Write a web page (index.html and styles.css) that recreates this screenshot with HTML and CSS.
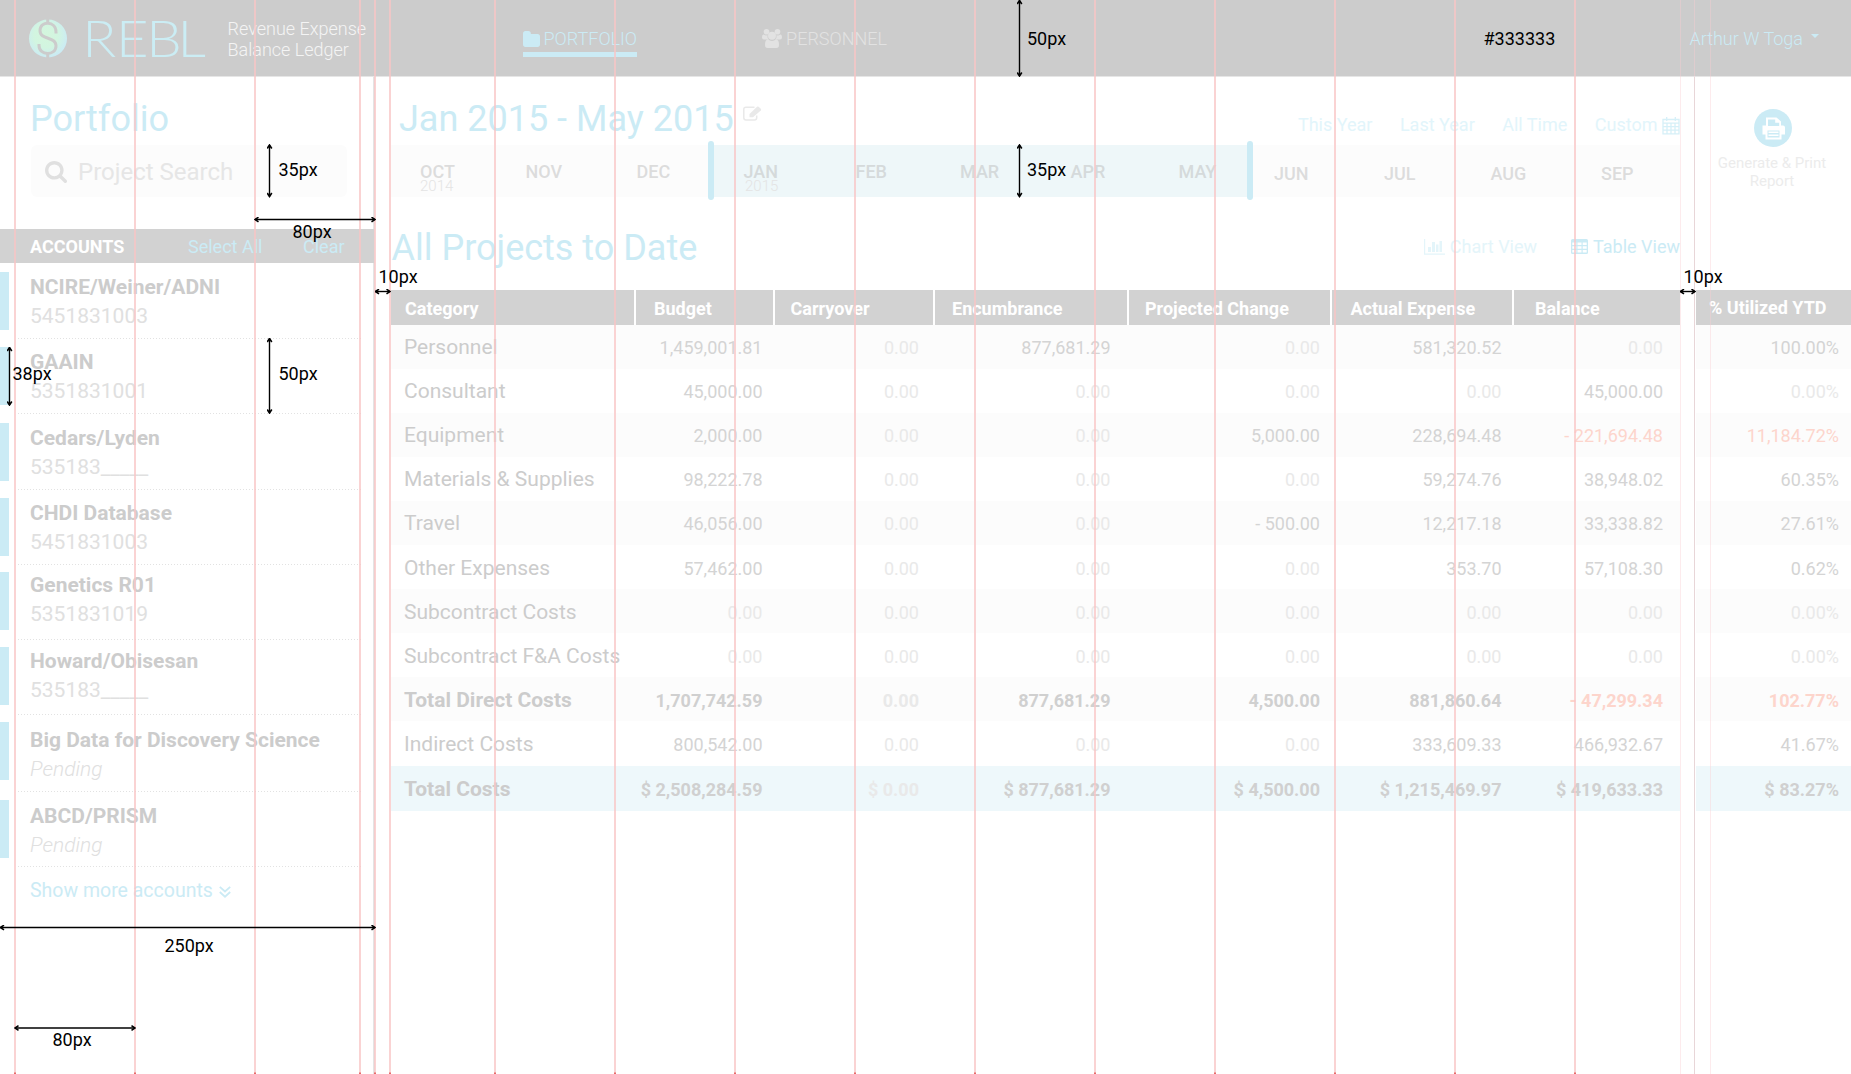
FILE: index.html
```html
<!DOCTYPE html>
<html lang="en">
<head>
<meta charset="utf-8">
<title>REBL - Portfolio</title>
<link rel="stylesheet" href="styles.css">
</head>
<body>
<header class="topbar">
  <svg class="logo" width="180" height="44" viewBox="0 0 180 44" role="img">
    <defs>
      <radialGradient id="coin" cx=".45" cy=".42" r=".58">
        <stop offset="0" stop-color="#d4f6dd"/><stop offset=".55" stop-color="#d2f5e0"/><stop offset="1" stop-color="#cbebf4"/>
      </radialGradient>
    </defs>
    <circle cx="19" cy="22.500" r="19" fill="url(#coin)"/>
    <path class="coin-mark" d="M27 17.500V16C27 4.500 11 4.500 11 14.500C11 24.500 27 20 27 30C27 40 10 40 10 29.500V28M18.700 3v5.500M18.700 37v5"/>
    <text class="wordmark" y="41" x="48.500 79 106.500 135" transform="scale(1.100 1)">REBL</text>
  </svg>
  <div class="tagline">Revenue Expense<br>Balance Ledger</div>
  <nav class="nav">
    <a class="nav-item active"><svg width="17" height="16" viewBox="0 128 1664 1408" preserveAspectRatio="none"><path d="M1664 608v704q0 92-66 158t-158 66H224q-92 0-158-66T0 1312V352q0-92 66-158t158-66h320q92 0 158 66t66 158v32h672q92 0 158 66t66 158z"/></svg>PORTFOLIO</a>
    <a class="nav-item"><svg class="people" width="20" height="19" viewBox="0 0 20 19"><circle cx="4.500" cy="2.800" r="2.800"/><circle cx="15.500" cy="2.800" r="2.800"/><path d="M0 8.500Q0 5.500 1.800 5.500Q4 7 5.500 6Q5 9 7 10.500H2Q0 10.500 0 8.500ZM20 8.500Q20 5.500 18.200 5.500Q16 7 14.500 6Q15 9 13 10.500H18Q20 10.500 20 8.500Z"/><circle cx="10" cy="6.800" r="4"/><path d="M3 16Q3 10.500 6 10.300Q10 13.500 14 10.300Q17 10.500 17 16Q17 19 14.500 19H5.500Q3 19 3 16Z"/></svg>PERSONNEL</a>
  </nav>
  <a class="user">Arthur W Toga<span class="caret"></span></a>
</header>

<div class="body">
  <aside class="sidebar">
    <h1 class="title">Portfolio</h1>
    <div class="search">
      <svg width="22" height="22" viewBox="64 128 1664 1664"><path d="M1216 832q0-185-131.500-316.500T768 384 451.500 515.500 320 832t131.500 316.500T768 1280t316.500-131.500T1216 832zm512 832q0 52-38 90t-90 38q-54 0-90-38l-343-342q-179 124-399 124-143 0-273.500-55.500t-225-150-150-225T64 832t55.500-273.500 150-225 225-150T768 128t273.500 55.500 225 150 150 225T1472 832q0 220-124 399l343 343q37 37 37 90z"/></svg>
      <span>Project Search</span>
    </div>
    <div class="accounts-head"><b>ACCOUNTS</b><a class="select-all">Select All</a><a>Clear</a></div>
    <ul class="accounts">
      <li class="a1"><i></i><div><b>NCIRE/Weiner/ADNI</b><span>5451831003</span></div></li>
      <li class="a2"><i></i><div><b>GAAIN</b><span>5351831001</span></div></li>
      <li class="a3"><i></i><div><b>Cedars/Lyden</b><span>535183_____</span></div></li>
      <li class="a4"><i></i><div><b>CHDI Database</b><span>5451831003</span></div></li>
      <li class="a5"><i></i><div><b>Genetics R01</b><span>5351831019</span></div></li>
      <li class="a6"><i></i><div><b>Howard/Obisesan</b><span>535183_____</span></div></li>
      <li class="a7"><i></i><div><b>Big Data for Discovery Science</b><span class="pending">Pending</span></div></li>
      <li class="a8"><i></i><div><b>ABCD/PRISM</b><span class="pending">Pending</span></div></li>
    </ul>
    <a class="more">Show more accounts<svg width="12" height="12" viewBox="0 0 12 12"><path d="M.8 .8L6 5.500L11.200 .8M.8 6L6 10.700L11.200 6"/></svg></a>
  </aside>

  <main class="main">
    <div class="range-head">
      <h2 class="title">Jan 2015 - May 2015</h2>
      <svg class="edit" width="19" height="15" viewBox="0 0 19 15"><path class="edit-box" d="M11.500 1.200H3Q.8 1.200 .8 3.200V11.800Q.8 13.900 3 13.900H11.500Q13.700 13.900 13.700 11.800V9.500"/><path d="M6.500 11.200V8L14 .8Q14.800 .1 15.600 .8L17.800 2.800Q18.500 3.600 17.800 4.400L10 11.200Z"/></svg>
      <div class="ranges"><a>This Year</a><a>Last Year</a><a>All Time</a><a>Custom</a>
        <svg width="18" height="19" viewBox="0 0 18 19"><path d="M1 3.500H17V17.800H1ZM1 7.200H17M1 10.700H17M1 14.200H17M5 7V18M9 7V18M13 7V18M4.700 1V5M13.300 1V5"/></svg>
      </div>
    </div>
    <div class="timeline">
      <div class="month">OCT<small>2014</small></div><div class="month">NOV</div><div class="month">DEC</div><div class="month on">JAN<small>2015</small></div><div class="month on">FEB</div><div class="month on">MAR</div><div class="month on">APR</div><div class="month on">MAY</div><div class="month low">JUN</div><div class="month low">JUL</div><div class="month low">AUG</div><div class="month low">SEP</div>
      <div class="selection"></div>
    </div>
    <div class="view-head">
      <h2 class="title">All Projects to Date</h2>
      <a class="view dim"><svg width="21" height="16" viewBox="0 0 21 16"><path d="M0 0H1.200V14.500H21V15.700H0ZM4 8H7V13H4ZM8 3H11V13H8ZM12 5.500H14.500V13H12ZM15.500 2H18V13H15.500Z"/></svg>Chart View</a>
      <a class="view"><svg width="17" height="15" viewBox="0 0 17 15"><path fill-rule="evenodd" d="M1.500 0H15.500Q17 0 17 1.500V13.500Q17 15 15.500 15H1.500Q0 15 0 13.500V1.500Q0 0 1.500 0ZM1.300 3.500V6H5.300V3.500ZM6.500 3.500V6H10.500V3.500ZM11.700 3.500V6H15.700V3.500ZM1.300 7.200V9.800H5.300V7.200ZM6.500 7.200V9.800H10.500V7.200ZM11.700 7.200V9.800H15.700V7.200ZM1.300 11V13.600H5.300V11ZM6.500 11V13.600H10.500V11ZM11.700 11V13.600H15.700V11Z"/></svg>Table View</a>
    </div>
    <table class="ledger">
      <colgroup><col class="c1"><col class="c2"><col class="c3"><col class="c4"><col class="c5"><col class="c6"><col class="c7"></colgroup>
      <thead><tr><th>Category</th><th>Budget</th><th>Carryover</th><th>Encumbrance</th><th>Projected Change</th><th>Actual Expense</th><th>Balance</th></tr></thead>
      <tbody>
        <tr><td>Personnel</td><td>1,459,001.81</td><td class="z">0.00</td><td>877,681.29</td><td class="z">0.00</td><td>581,320.52</td><td class="z">0.00</td></tr>
        <tr><td>Consultant</td><td>45,000.00</td><td class="z">0.00</td><td class="z">0.00</td><td class="z">0.00</td><td class="z">0.00</td><td>45,000.00</td></tr>
        <tr><td>Equipment</td><td>2,000.00</td><td class="z">0.00</td><td class="z">0.00</td><td>5,000.00</td><td>228,694.48</td><td class="neg">- 221,694.48</td></tr>
        <tr><td>Materials &amp; Supplies</td><td>98,222.78</td><td class="z">0.00</td><td class="z">0.00</td><td class="z">0.00</td><td>59,274.76</td><td>38,948.02</td></tr>
        <tr><td>Travel</td><td>46,056.00</td><td class="z">0.00</td><td class="z">0.00</td><td>- 500.00</td><td>12,217.18</td><td>33,338.82</td></tr>
        <tr><td>Other Expenses</td><td>57,462.00</td><td class="z">0.00</td><td class="z">0.00</td><td class="z">0.00</td><td>353.70</td><td>57,108.30</td></tr>
        <tr><td>Subcontract Costs</td><td class="z">0.00</td><td class="z">0.00</td><td class="z">0.00</td><td class="z">0.00</td><td class="z">0.00</td><td class="z">0.00</td></tr>
        <tr><td>Subcontract F&amp;A Costs</td><td class="z">0.00</td><td class="z">0.00</td><td class="z">0.00</td><td class="z">0.00</td><td class="z">0.00</td><td class="z">0.00</td></tr>
        <tr class="sum"><td>Total Direct Costs</td><td>1,707,742.59</td><td class="z">0.00</td><td>877,681.29</td><td>4,500.00</td><td>881,860.64</td><td class="neg">- 47,299.34</td></tr>
        <tr><td>Indirect Costs</td><td>800,542.00</td><td class="z">0.00</td><td class="z">0.00</td><td class="z">0.00</td><td>333,609.33</td><td>466,932.67</td></tr>
        <tr class="sum total"><td>Total Costs</td><td>$ 2,508,284.59</td><td class="z">$ 0.00</td><td>$ 877,681.29</td><td>$ 4,500.00</td><td>$ 1,215,469.97</td><td>$ 419,633.33</td></tr>
      </tbody>
    </table>
  </main>

  <aside class="rail">
    <a class="print">
      <svg width="38" height="38" viewBox="0 0 38 38"><circle cx="19" cy="19" r="19"/><path class="paper" fill-rule="evenodd" d="M12 8.500H22.500L27 12.500V16.500H29Q31 16.500 31 18.500V25.500H27.500V30.500H11.500V25.500H8.500V16.500H12ZM14 10.500V17H25.200V13.800H21.200V10.500ZM13.500 21.500V28.500H25.500V21.500ZM14.500 22.500H24.500V24H14.500ZM14.500 25.500H24.500V27H14.500Z"/></svg>
      <span>Generate &amp; Print<br>Report</span>
    </a>
    <table class="ledger util">
      <thead><tr><th>% Utilized YTD</th></tr></thead>
      <tbody>
        <tr><td>100.00%</td></tr>
        <tr><td class="z">0.00%</td></tr>
        <tr><td class="neg">11,184.72%</td></tr>
        <tr><td>60.35%</td></tr>
        <tr><td>27.61%</td></tr>
        <tr><td>0.62%</td></tr>
        <tr><td class="z">0.00%</td></tr>
        <tr><td class="z">0.00%</td></tr>
        <tr class="sum"><td class="neg">102.77%</td></tr>
        <tr><td>41.67%</td></tr>
        <tr class="sum total"><td>$ 83.27%</td></tr>
      </tbody>
    </table>
  </aside>
</div>

<!-- layout grid and dimension callouts laid over the page -->
<svg class="specs" width="1851" height="1074" viewBox="0 0 1851 1074">
  <defs>
    <marker id="tip" viewBox="0 0 6 6" refX="5" refY="3" markerWidth="6" markerHeight="6" markerUnits="userSpaceOnUse" orient="auto-start-reverse"><path d="M1.500 .7L5 3L1.500 5.300" fill="none" stroke="#000" stroke-width="1.600"/></marker>
  </defs>
  <path class="guide" d="M15 0V1074M135 0V1074M255 0V1074M360 0V1074M375 0V1074M390 0V1074M495 0V1074M615 0V1074M735 0V1074M855 0V1074M975 0V1074M1095 0V1074M1215 0V1074M1335 0V1074M1455 0V1074M1575 0V1074"/>
  <path class="guide-end" d="M15 1072.500v2M135 1072.500v2M255 1072.500v2M360 1072.500v2M375 1072.500v2M390 1072.500v2M495 1072.500v2M615 1072.500v2M735 1072.500v2M855 1072.500v2M975 1072.500v2M1095 1072.500v2M1215 1072.500v2M1335 1072.500v2M1455 1072.500v2M1575 1072.500v2"/>
  <path class="guide-thin" d="M1680.500 0V1074M1694.500 0V1074M1710.500 0V1074"/>
  <g class="dim-lines">
    <path d="M1019.500 0.500V76"/><path d="M1019.500 145V196.500"/><path d="M269.500 145V196.500"/><path d="M255 219.500H375"/>
    <path d="M375.500 291.500H390"/><path d="M1680.500 291.500H1695"/><path d="M269.500 338.500V413"/><path d="M9.500 347.500V405"/>
    <path d="M0.500 927.500H375"/><path d="M15 1028H135"/>
  </g>
  <g class="dim-text">
    <text x="1027" y="45">50px</text><text x="1027" y="176">35px</text><text x="278.500" y="176">35px</text><text x="292.500" y="238">80px</text>
    <text x="378.500" y="283">10px</text><text x="1683.500" y="283">10px</text><text x="278.500" y="380">50px</text><text x="12.500" y="380">38px</text>
    <text x="164.500" y="952">250px</text><text x="52.500" y="1046">80px</text><text x="1483.500" y="45">#333333</text>
  </g>
</svg>
</body>
</html>
```
FILE: styles.css
```css
* { box-sizing: border-box; }
body { margin: 0; width: 1851px; height: 1074px; overflow: hidden; position: relative; background: #fff; font: 18px/24px Roboto, "Liberation Sans", sans-serif; color: #d4d4d4; display: flex; flex-direction: column; }
svg { flex: none; display: block; fill: currentColor; }

.topbar { height: 77px; background: #ccc; border-bottom: 1px solid #e6e6e6; display: flex; align-items: flex-start; }
.logo { margin: 16px 0 0 29px; overflow: visible; }
.coin-mark { fill: none; stroke: #ccc; stroke-width: 3; }
.wordmark { font: 300 51px Lato, sans-serif; fill: #cbedf4; }
.tagline { margin: 18px 0 0 18.5px; width: 160px; font-weight: 300; line-height: 21px; color: #f4f4f4; }
.nav { display: flex; margin: 27px 0 0 135px; gap: 125px; }
.nav-item { display: flex; font-weight: 300; color: #e2e2e2; gap: 4px; height: 30px; }
.nav-item svg { margin-top: 4px; }
.nav-item svg.people { margin-top: 2px; }
.nav-item.active { color: #cbebf5; border-bottom: 5px solid #cbebf5; }
.user { margin: 27px 32px 0 auto; display: flex; font-weight: 300; color: #cbebf5; }
.caret { margin: 7px 0 0 8px; border: 4.5px solid transparent; border-top-color: #cbebf5; border-bottom: 0; align-self: flex-start; }

.body { flex: 1; display: flex; }
.title { margin: 0; font-weight: 400; font-size: 36px; line-height: 42px; color: #cbebf5; }

.sidebar { width: 375px; border-right: 2px solid #e4e4e4; padding-top: 21px; }
.sidebar .title { padding-left: 30px; }
.search { margin: 5px 0 0 31px; width: 316px; height: 52px; border-radius: 6px; background: #fcfcfc; display: flex; align-items: center; gap: 11px; padding: 1px 0 0 14px; font-size: 24px; color: #e6e6e6; }
.search svg { color: #e0e0e0; }
.accounts-head { margin: 32px -1px 0 0; height: 34px; background: #d2d2d2; display: flex; padding: 6px 0 0 30px; color: #cbebf5; }
.accounts-head b { color: #fff; width: 158px; }
.select-all { width: 115px; }
.accounts { list-style: none; margin: 0; padding: 0; font-size: 21px; line-height: 28px; }
.accounts li { display: flex; height: 75px; }
.accounts i { width: 9px; height: 58px; margin-top: 7px; background: #cbebf5; }
.accounts div { margin-left: 9px; width: 343px; padding-left: 12px; display: flex; flex-direction: column; background: repeating-linear-gradient(90deg, #e2e2e2 0 1px, transparent 1px 3px) bottom / 100% 1px no-repeat; }
.accounts b { color: #ccc; }
.accounts span { color: #e0e0e0; margin-top: .5px; }
.accounts .pending { font-style: italic; font-weight: 300; }
.accounts .a1, .accounts .a3 { height: 76px; }
.accounts .a7 { height: 77px; }
.accounts .a1 i, .accounts .a3 i { margin-top: 9px; }
.accounts .a2 i, .accounts .a4 i, .accounts .a8 i { margin-top: 8px; }
.a1 div, .a3 div, .a8 div { padding-top: 10px; }
.a2 div, .a4 div { padding-top: 9px; }
.a5 div { padding-top: 6px; }
.a6 div { padding-top: 7px; }
.a7 div { padding-top: 11px; }
.more { display: flex; margin: 12px 0 0 30px; gap: 6px; font-size: 19.5px; color: #cbebf5; }
.more svg { margin-top: 7px; fill: none; stroke: #cbebf5; stroke-width: 1.8; }

.main { width: 1289px; margin-left: 16px; }
.range-head { height: 68px; display: flex; padding: 21px 0 0 8px; }
.edit { margin: 8px 0 0 9px; color: #e9e9e9; }
.edit-box { fill: none; stroke: #e9e9e9; stroke-width: 1.5; }
.ranges { margin: 15px 0 0 auto; display: flex; color: #e2f5fb; gap: 27.5px; }
.ranges svg { margin: 3px 0 0 -23px; fill: none; stroke: #d6f0f8; stroke-width: 1.3; }
.timeline { position: relative; height: 52px; background: #fcfcfc; display: grid; grid-template-columns: 105.500px 111px 107px 112px 104.500px 110.500px 108px 95.500px 110px 106.500px 110.500px auto; padding-left: 29px; }
.month { position: relative; z-index: 1; padding-top: 16px; line-height: 22px; font-weight: 500; color: #dcdcdc; }
.month.on { color: #d5dadb; }
.month.low { padding-top: 18px; }
.month small { display: block; margin-top: -3.5px; font-size: 15px; line-height: 13px; font-weight: 300; color: #e4e4e4; }
.month.on small { padding-left: 1.5px; }
.selection { position: absolute; left: 320px; top: 0; width: 538.5px; height: 52px; background: #eef7f9; }
.selection::before, .selection::after { content: ""; position: absolute; top: -4px; width: 6px; height: 59px; border-radius: 3px; background: #cbebf5; }
.selection::before { left: -3px; }
.selection::after { right: -3px; }
.view-head { height: 92.500px; display: flex; padding-top: 30px; }
.view-head .title { flex: 1; padding-left: .5px; }
.view { display: flex; margin-top: 8px; gap: 5px; color: #cbebf5; }
.view svg { margin-top: 4px; }
.view.dim { color: #e4f5fa; margin-right: 34px; }

.ledger { width: 1289px; border-collapse: collapse; table-layout: fixed; }
.c1 { width: 244px; } .c2 { width: 138.500px; } .c3 { width: 160px; } .c4 { width: 194px; } .c5 { width: 203.500px; } .c6 { width: 182px; } .c7 { width: 167px; }
.ledger th { height: 35px; background: #d2d2d2; color: #fff; font-weight: 700; text-align: left; padding: 2px 0 0 14px; line-height: 33px; white-space: nowrap; }
.ledger th + th { border-left: 2px solid #fff; }
.ledger th:nth-child(2) { padding-left: 18px; }
.ledger th:nth-child(3) { padding-left: 16px; }
.ledger th:nth-child(4) { padding-left: 17.500px; }
.ledger th:nth-child(5) { padding-left: 16.500px; }
.ledger th:nth-child(6) { padding-left: 18.500px; }
.ledger th:nth-child(7) { padding-left: 21px; }
.ledger td { height: 44px; padding: 2px 0 0; line-height: 42px; text-align: right; white-space: nowrap; }
.ledger tr:nth-child(n+6) td { padding-top: 4px; line-height: 40px; }
.ledger tr:nth-child(n+10) td { height: 45px; }
.ledger td:nth-child(2) { padding-right: 11px; }
.ledger td:nth-child(3) { padding-right: 14.500px; }
.ledger td:nth-child(4) { padding-right: 17px; }
.ledger td:nth-child(5) { padding-right: 11px; }
.ledger td:nth-child(6) { padding-right: 11.500px; }
.ledger td:nth-child(7) { padding-right: 17px; }
.ledger:not(.util) td:first-child { text-align: left; font-size: 21px; padding-top: 0; padding-left: 13px; color: #ccc; }
.ledger:not(.util) tr:nth-child(n+6) td:first-child { padding-top: 2px; }
.ledger tbody tr:nth-child(odd) { background: #fcfcfc; }
.ledger .sum { font-weight: 700; color: #d0d0d0; }
.ledger tbody tr.total:last-child { background: #eef8fb; }
.ledger .z { color: #e9e9e9; }
.ledger .neg { color: #fdd5cc; }

.rail { width: 157px; margin-left: 14px; border-left: 1px solid #dcdcdc; padding-left: 1px; }
.print { display: flex; flex-direction: column; align-items: center; height: 212.500px; padding: 32px 3px 0 0; font-size: 15px; line-height: 18px; font-weight: 400; color: #ececec; text-align: center; }
.print svg { color: #cbebf5; margin: 0 -1px 7px 1px; }
.paper { fill: #fff; }
.util { width: 155px; }
.util th { padding: 0 0 0 13px; }
.ledger.util td { padding-right: 12px; }

.specs { position: absolute; left: 0; top: 0; z-index: 5; pointer-events: none; }
.guide { stroke: rgba(248, 197, 197, .76); stroke-width: 2; }
.guide-end { stroke: #e66a6a; stroke-width: 2; }
.guide-thin { stroke: rgba(250, 205, 210, .4); stroke-width: 1; }
.dim-lines { stroke: #000; stroke-width: 1.4; fill: none; }
.dim-lines path { marker-start: url(#tip); marker-end: url(#tip); }
.dim-text { fill: #000; font-size: 18px; }
```
